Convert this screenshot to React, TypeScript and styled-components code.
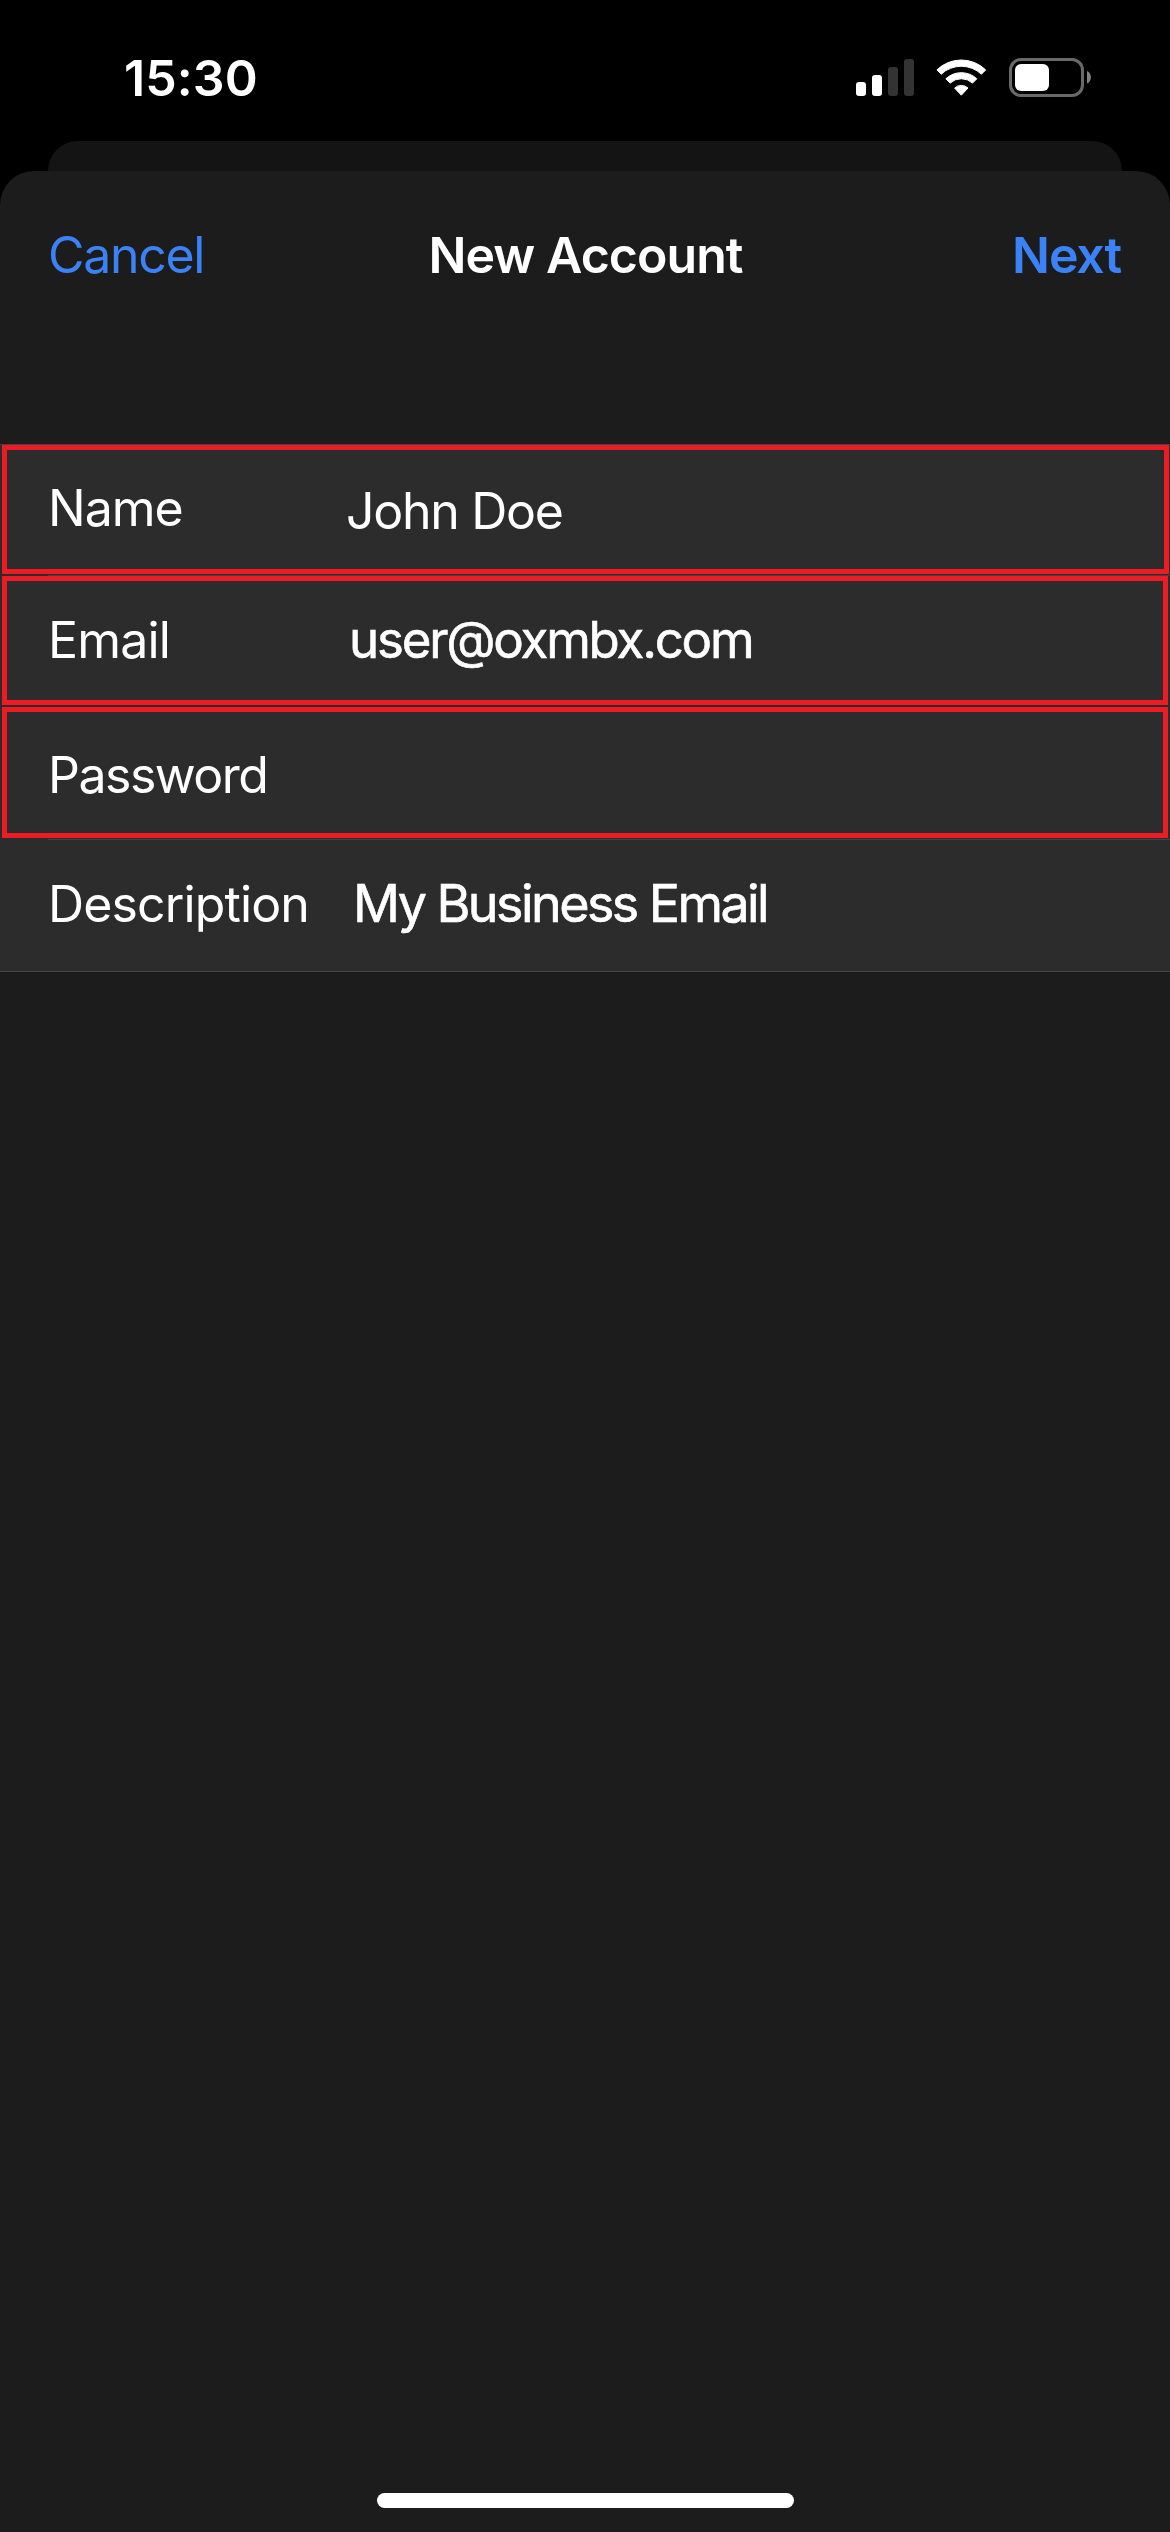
import React from "react";
import styled, { createGlobalStyle } from "styled-components";

const GlobalStyle = createGlobalStyle`
  *, *::before, *::after { box-sizing: border-box; }
  html, body { margin: 0; background: #000; }
  body { font-family: Inter, "Liberation Sans", sans-serif; color: #fff; }
`;

const Screen = styled.main`
  display: flex;
  flex-direction: column;
  width: 1170px;
  height: 2532px;
  overflow: hidden;
  background: #000;
`;

const StatusBar = styled.header`
  display: flex;
  justify-content: space-between;
  height: 141px;
  padding: 48px 78px 0 124px;
`;

const Clock = styled.time`
  font-size: 50px;
  font-weight: 600;
  line-height: 60px;
  letter-spacing: 0.1px;
`;

const StatusIcons = styled.div`
  display: flex;
  align-items: flex-start;
  gap: 21px;
  padding-top: 10px;
`;

const SheetBehind = styled.div`
  height: 30px;
  margin: 0 48px;
  border-radius: 30px 30px 0 0;
  background: #141414;
`;

const Sheet = styled.section`
  display: flex;
  flex: 1;
  flex-direction: column;
  border-radius: 34px 34px 0 0;
  background: #1c1c1c;
`;

const NavBar = styled.nav`
  display: grid;
  grid-template-columns: 1fr auto 1fr;
  align-items: center;
  height: 273px;
  padding: 54px 49px 159px 48px;
`;

const NavButton = styled.button<{ $primary?: boolean }>`
  justify-self: ${(p) => (p.$primary ? "end" : "start")};
  padding: 0;
  border: 0;
  background: none;
  color: #3b82f7;
  font: ${(p) => (p.$primary ? 600 : 400)} 50px / 60px Inter, "Liberation Sans", sans-serif;
  letter-spacing: ${(p) => (p.$primary ? "-1.1px" : "-1.3px")};
`;

const Title = styled.h1`
  margin: 0;
  padding-left: 2px;
  font-size: 50px;
  font-weight: 600;
  line-height: 60px;
  letter-spacing: -0.95px;
`;

const Form = styled.div`
  display: flex;
  flex-direction: column;
  border-top: 1px solid #434345;
  border-bottom: 1px solid #434345;
  background: #2c2c2c;
`;

const Row = styled.div<{ $height: number; $outlined?: boolean; $right?: number }>`
  display: grid;
  grid-template-columns: 297px 1fr;
  align-items: start;
  height: ${(p) => p.$height}px;
  margin: 0 ${(p) => p.$right ?? 2}px 0 2px;
  padding-left: ${(p) => (p.$outlined ? 41 : 46)}px;
  border: ${(p) => (p.$outlined ? "5px solid #ed1c24" : "0")};
`;

const Separator = styled.div<{ $before: number; $visible?: boolean }>`
  height: 1px;
  margin: ${(p) => p.$before}px 0 0 48px;
  background: ${(p) => (p.$visible ? "#434345" : "transparent")};
`;

const Label = styled.label<{ $top: number; $spacing: number }>`
  padding-top: ${(p) => p.$top}px;
  font-size: 50px;
  line-height: 60px;
  letter-spacing: ${(p) => p.$spacing}px;
  white-space: nowrap;
`;

const Value = styled.span<{ $top: number; $spacing: number; $indent?: number; $size?: number; $heavier?: boolean }>`
  padding: ${(p) => p.$top}px 0 0 ${(p) => p.$indent ?? 0}px;
  font-size: ${(p) => p.$size ?? 50}px;
  line-height: 60px;
  letter-spacing: ${(p) => p.$spacing}px;
  white-space: nowrap;
  -webkit-text-stroke: ${(p) => (p.$heavier ? "0.6px #fff" : "0")};
`;

const HomeIndicator = styled.div`
  width: 417px;
  height: 15px;
  margin: auto auto 24px 377px;
  border-radius: 8px;
  background: #fff;
`;

const SignalIcon = () => (
  <svg width="59" height="39" viewBox="0 0 59 39" aria-label="Signal">
    <rect x="0" y="24" width="10" height="14" rx="3" fill="#fff" />
    <rect x="16" y="17" width="10" height="21" rx="3" fill="#fff" />
    <rect x="32" y="9" width="10" height="29" rx="3" fill="#333" />
    <rect x="48" y="1" width="10" height="37" rx="3" fill="#333" />
  </svg>
);

const WifiIcon = () => (
  <svg width="52" height="39" viewBox="0 0 52 39" fill="#fff" stroke="#fff" strokeWidth="1" strokeLinejoin="round" aria-label="Wi-Fi">
    <path d="M.9 11.9A35 35 0 0 1 49.7 11.9L45.4 16.2A29.4 29.4 0 0 0 5.2 16.2Z" />
    <path d="M9.8 20.8A22.6 22.6 0 0 1 40.8 20.8L36.5 25.1A16.6 16.6 0 0 0 14.1 25.1Z" />
    <path d="M18.6 30A9.9 9.9 0 0 1 32 30L25.3 37.2Z" />
  </svg>
);

const BatteryIcon = () => (
  <svg width="83" height="39" viewBox="0 0 83 39" aria-label="Battery">
    <rect x="1.5" y="1.5" width="72" height="36" rx="10.5" fill="none" stroke="#696969" strokeWidth="3" />
    <rect x="6" y="6" width="34" height="27" rx="6" fill="#fff" />
    <path d="M78 13C83.2 15 83.2 23.5 78 25.5Z" fill="#808080" />
  </svg>
);

export default function App() {
  return (
    <>
      <GlobalStyle />
      <Screen>
        <StatusBar>
          <Clock>15:30</Clock>
          <StatusIcons>
            <SignalIcon />
            <WifiIcon />
            <BatteryIcon />
          </StatusIcons>
        </StatusBar>
        <SheetBehind />
        <Sheet>
          <NavBar>
            <NavButton>Cancel</NavButton>
            <Title>New Account</Title>
            <NavButton $primary>Next</NavButton>
          </NavBar>
          <Form>
            <Row $height={129} $outlined $right={1}>
              <Label $top={28} $spacing={-1}>Name</Label>
              <Value $top={31} $spacing={-1.3} $indent={1}>John Doe</Value>
            </Row>
            <Separator $before={1} $visible />
            <Row $height={129} $outlined>
              <Label $top={29} $spacing={-0.8}>Email</Label>
              <Value $top={29} $spacing={-2.2} $indent={4} $size={51} $heavier>user@oxmbx.com</Value>
            </Row>
            <Separator $before={1} />
            <Row $height={131} $outlined>
              <Label $top={33} $spacing={-1.5}>Password</Label>
            </Row>
            <Separator $before={1} $visible />
            <Row $height={131}>
              <Label $top={34} $spacing={-0.87}>Description</Label>
              <Value $top={34} $spacing={-2.56} $indent={8} $size={52} $heavier>My Business Email</Value>
            </Row>
          </Form>
          <HomeIndicator />
        </Sheet>
      </Screen>
    </>
  );
}
